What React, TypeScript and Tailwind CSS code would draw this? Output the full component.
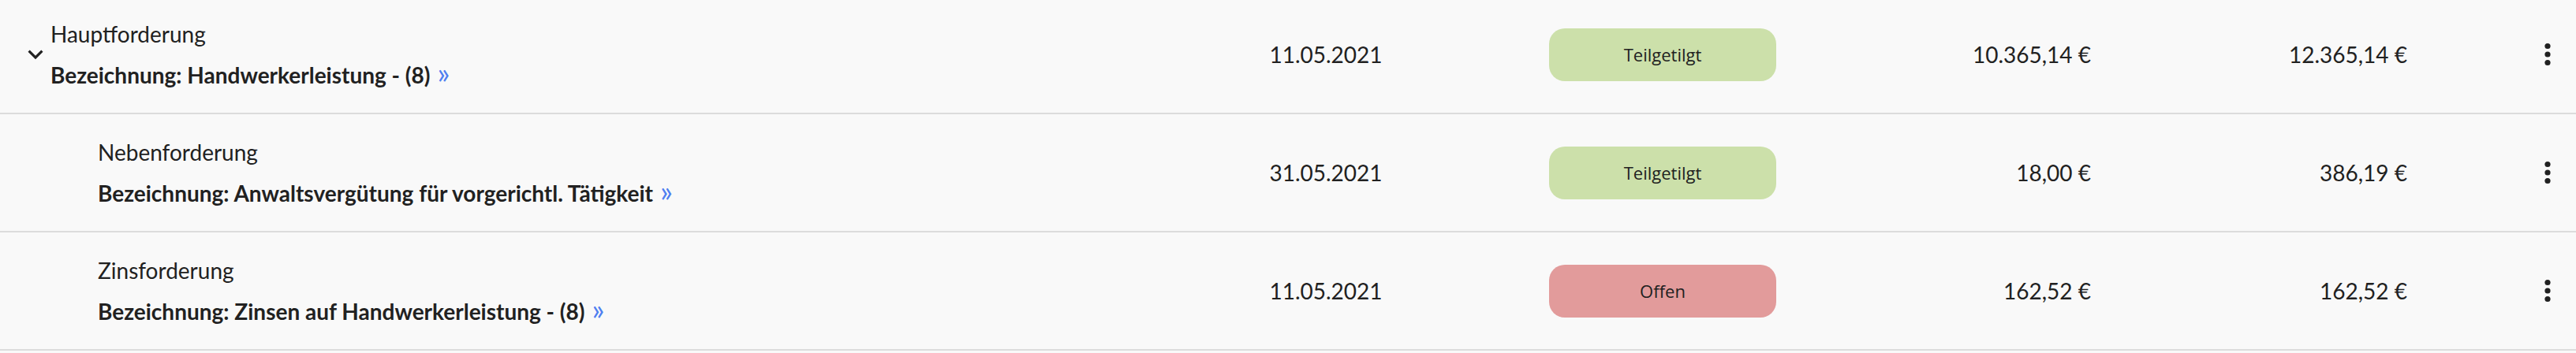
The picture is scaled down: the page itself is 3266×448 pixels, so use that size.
import React from "react";

type Row = {
  kind: string;
  title: string;
  date: string;
  status: "Teilgetilgt" | "Offen";
  amount: string;
  total: string;
  main?: boolean;
};

const rows: Row[] = [
  {
    kind: "Hauptforderung",
    title: "Bezeichnung: Handwerkerleistung - (8)",
    date: "11.05.2021",
    status: "Teilgetilgt",
    amount: "10.365,14 €",
    total: "12.365,14 €",
    main: true,
  },
  {
    kind: "Nebenforderung",
    title: "Bezeichnung: Anwaltsvergütung für vorgerichtl. Tätigkeit",
    date: "31.05.2021",
    status: "Teilgetilgt",
    amount: "18,00 €",
    total: "386,19 €",
  },
  {
    kind: "Zinsforderung",
    title: "Bezeichnung: Zinsen auf Handwerkerleistung - (8)",
    date: "11.05.2021",
    status: "Offen",
    amount: "162,52 €",
    total: "162,52 €",
  },
];

function Chevron() {
  return (
    <svg width="38" height="38" viewBox="0 0 24 24" className="ml-[26px] text-[#212121]">
      <path fill="currentColor" d="M16.59 8.59L12 13.17 7.41 8.59 6 10l6 6 6-6z" />
    </svg>
  );
}

function Kebab() {
  return (
    <svg width="14" height="32" viewBox="0 0 14 32" className="text-[#212121]">
      <circle cx="7" cy="5.5" r="3.6" fill="currentColor" />
      <circle cx="7" cy="16" r="3.6" fill="currentColor" />
      <circle cx="7" cy="26.5" r="3.6" fill="currentColor" />
    </svg>
  );
}

export default function App() {
  return (
    <div className="w-full h-[448px] overflow-hidden bg-[#f9f9f9] text-[#212121] font-['Lato',_'Noto_Sans',_sans-serif]">
      <div className="-mt-[5px]">
        {rows.map((r, i) => (
          <div key={i} className="flex items-center h-[150px] border-b-2 border-[#dcdcdc]">
            <div className="flex items-center w-[1581px]">
              <div className="w-[64px] flex items-center">{r.main ? <Chevron /> : null}</div>
              <div className={`flex flex-col gap-[18px] ${r.main ? "" : "pl-[60px]"}`}>
                <div className="text-[28px] leading-[34px]">{r.kind}</div>
                <div className="text-[28px] leading-[34px] font-bold">
                  {r.title}
                  <span className="font-normal text-[37px] leading-[0] text-[#4f7ff0] ml-[9px]">»</span>
                </div>
              </div>
            </div>
            <div className="w-[200px] text-center text-[28px] leading-[34px]">{r.date}</div>
            <div className="w-[471px] pl-[183px]">
              <div
                className={`w-[288px] h-[67px] rounded-[20px] flex items-center justify-center text-[22px] font-['Open_Sans',_sans-serif] ${
                  r.status === "Offen" ? "bg-[#e29b9b]" : "bg-[#cce0aa]"
                }`}
              >
                {r.status}
              </div>
            </div>
            <div className="w-[399px] text-right text-[28px] leading-[34px]">{r.amount}</div>
            <div className="w-[401px] text-right text-[28px] leading-[34px]">{r.total}</div>
            <div className="pl-[171px] flex items-center">
              <Kebab />
            </div>
          </div>
        ))}
      </div>
    </div>
  );
}
